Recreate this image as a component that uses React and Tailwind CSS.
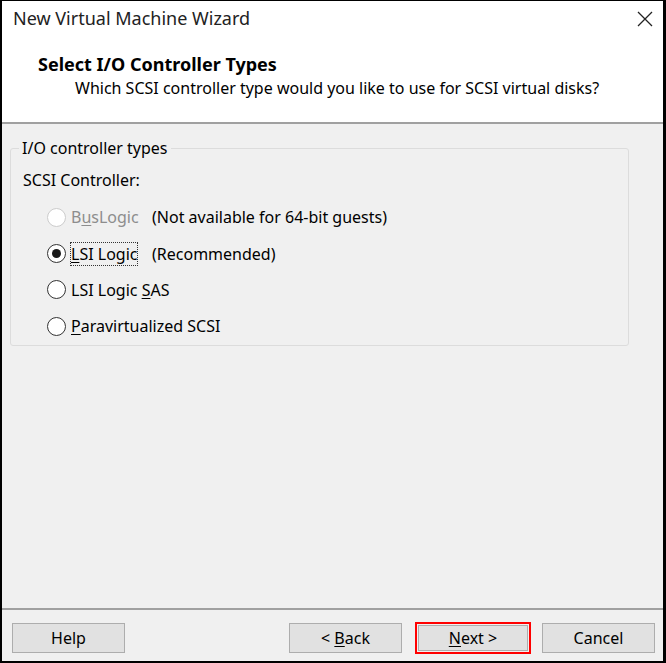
import React from 'react';

const font = { fontFamily: '"Noto Sans", "Open Sans", sans-serif' };

function Radio({ checked, disabled }) {
  return (
    <span
      className={`flex h-[19px] w-[19px] shrink-0 items-center justify-center rounded-full border bg-white ${
        disabled ? 'border-[#cccccc]' : 'border-[#333333]'
      }`}
    >
      {checked && <span className="h-[9px] w-[9px] rounded-full bg-[#1a1a1a]" />}
    </span>
  );
}

function Option({ label, note, checked, disabled, focused }) {
  return (
    <div className="flex h-[36.4px] items-center whitespace-nowrap">
      <Radio checked={checked} disabled={disabled} />
      <span className={`ml-[5px] w-[81px] shrink-0 ${disabled ? 'text-[#8d8d8d]' : 'text-black'}`}>
        <span className={focused ? 'outline-1 outline-dotted outline-[#333]' : ''}>{label}</span>
      </span>
      {note && <span className="text-black">{note}</span>}
    </div>
  );
}

function Btn({ children, className = '', size = 'h-[30px] w-[113px]' }) {
  return (
    <button
      className={`flex ${size} shrink-0 items-center justify-center border border-[#adadad] bg-[#e1e1e1] text-[16px] text-black ${className}`}
    >
      {children}
    </button>
  );
}

const U = ({ children }) => <span className="underline underline-offset-2">{children}</span>;

export default function App() {
  return (
    <div className="h-[663px] w-[666px] bg-black" style={font}>
      <div className="flex h-[660px] w-[661px] translate-x-[2px] translate-y-px flex-col bg-[#f0f0f0] text-[16px]">
        {/* title + header */}
        <div className="h-[123px] border-b-2 border-[#a0a0a0] bg-white">
          <div className="flex h-[35px] items-center justify-between pl-[11px] pr-[10px]">
            <span className="text-[18px] text-[#222]">New Virtual Machine Wizard</span>
            <svg width="16" height="16" viewBox="0 0 16 16">
              <path d="M1 1 L15 15 M15 1 L1 15" stroke="#222" strokeWidth="1.3" />
            </svg>
          </div>
          <div className="pl-[36px] pt-[17px] text-[18px] font-bold leading-[22px]">Select I/O Controller Types</div>
          <div className="pl-[73px] pt-[2px] leading-[22px] text-black">
            Which SCSI controller type would you like to use for SCSI virtual disks?
          </div>
        </div>

        {/* body */}
        <div className="flex-1 px-[8px] pt-[24px]">
          <div className="relative h-[198px] w-[619px] rounded-[3px] border border-[#dcdcdc] pl-[12px] pt-[20px]">
            <span className="absolute left-[8px] top-[-12px] bg-[#f0f0f0] px-[3px] leading-[22px]">I/O controller types</span>
            <div className="leading-[22px]">SCSI Controller:</div>
            <div className="mt-[8px] pl-[24px]">
              <Option label={<>B<U>u</U>sLogic</>} note="(Not available for 64-bit guests)" disabled />
              <Option label={<><U>L</U>SI Logic</>} note="(Recommended)" checked focused />
              <Option label={<>LSI Logic <U>S</U>AS</>} />
              <Option label={<><U>P</U>aravirtualized SCSI</>} />
            </div>
          </div>
        </div>

        {/* footer */}
        <div className="flex h-[53px] items-start border-t-2 border-[#a0a0a0] pl-[10px] pr-[8px] pt-[13px]">
          <Btn>Help</Btn>
          <Btn className="ml-auto">&lt;&nbsp;<U>B</U>ack</Btn>
          <div className="ml-[13px] -mt-px shrink-0 border-2 border-[#ff0000] p-px">
            <Btn size="h-[26px] w-[110px]"><U>N</U>ext &gt;</Btn>
          </div>
          <Btn className="ml-[11px]">Cancel</Btn>
        </div>
      </div>
    </div>
  );
}
